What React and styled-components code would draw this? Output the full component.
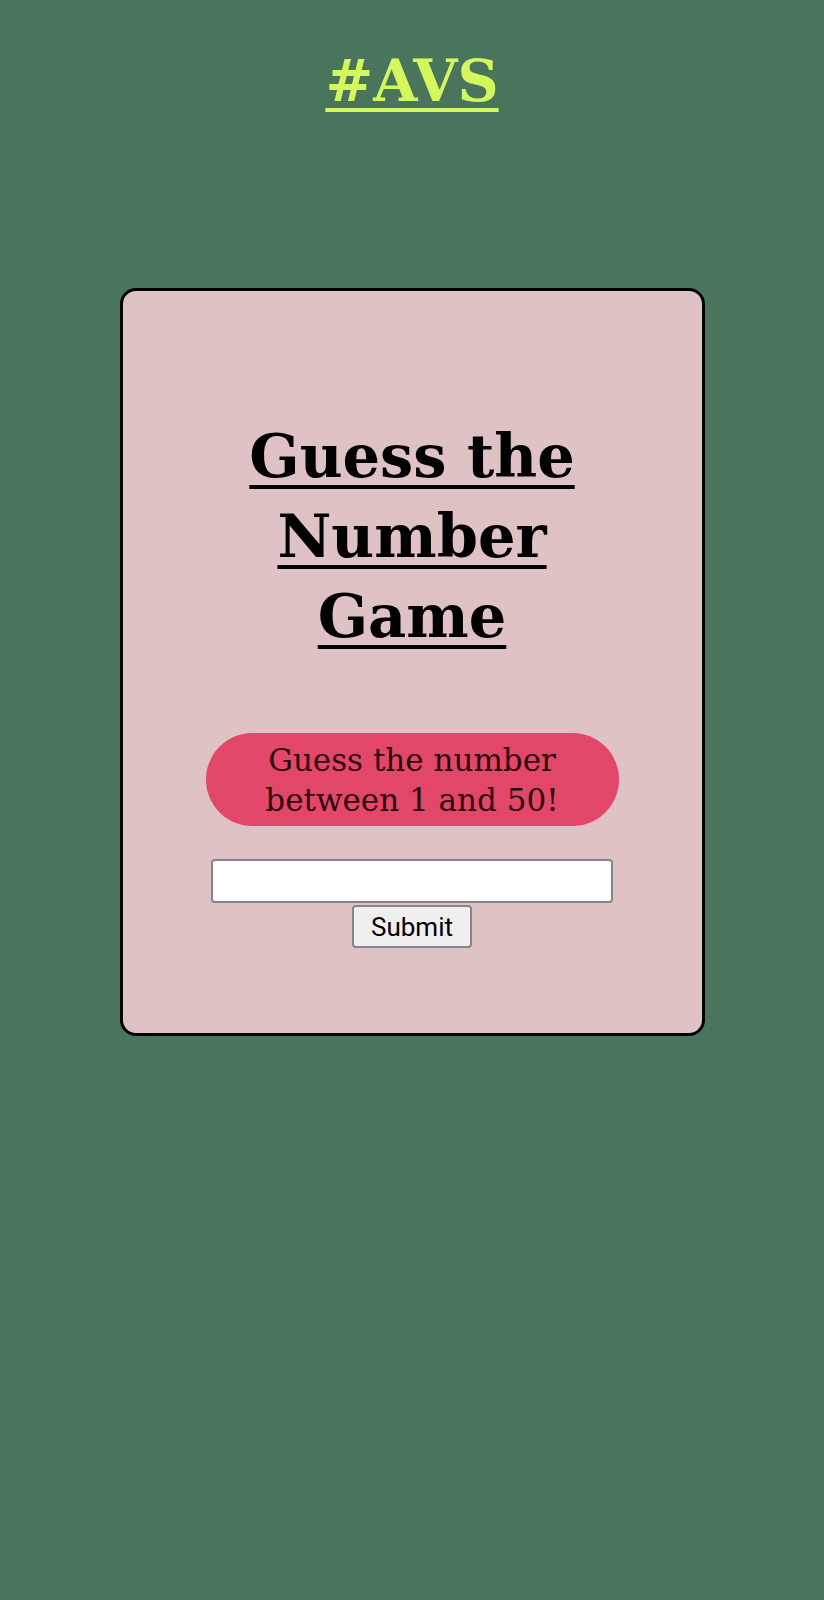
import React from 'react';
import styled, { createGlobalStyle } from 'styled-components';

const GlobalStyle = createGlobalStyle`
  body {
    margin: 0;
    background: #48755c;
    font-family: "DejaVu Serif", serif;
  }
`;

const Page = styled.div`
  display: flex;
  flex-direction: column;
  align-items: center;
  min-height: 1600px;
`;

const Brand = styled.h1`
  margin: 44px 0 0;
  font-size: 57px;
  line-height: 74px;
  font-weight: 700;
  color: #d4f75e;
  text-decoration: underline;
  text-decoration-thickness: 4px;
  text-underline-offset: 7px;
`;

const Card = styled.div`
  box-sizing: border-box;
  width: 585px;
  height: 748px;
  margin-top: 170px;
  padding-top: 126px;
  display: flex;
  flex-direction: column;
  align-items: center;
  background: #dfc2c3;
  border: 3px solid #000;
  border-radius: 16px;
`;

const Title = styled.h2`
  margin: 0;
  width: 400px;
  text-align: center;
  font-size: 59px;
  line-height: 80px;
  font-weight: 700;
  color: #000;
  text-decoration: underline;
  text-decoration-thickness: 4px;
  text-underline-offset: 8px;
`;

const Hint = styled.p`
  box-sizing: border-box;
  width: 413px;
  height: 93px;
  margin: 76px 0 0;
  padding: 0 40px;
  display: flex;
  align-items: center;
  justify-content: center;
  text-align: center;
  background: #e24668;
  border-radius: 47px;
  font-size: 31px;
  line-height: 40px;
  color: #2a0a10;
`;

const Form = styled.form`
  display: flex;
  flex-direction: column;
  align-items: center;
  margin-top: 33px;
`;

const Field = styled.input`
  box-sizing: border-box;
  width: 402px;
  height: 44px;
  border: 2px solid #858585;
  border-radius: 4px;
  background: #fff;
`;

const Button = styled.button`
  box-sizing: border-box;
  width: 120px;
  height: 43px;
  margin-top: 2px;
  border: 2px solid #858585;
  border-radius: 4px;
  background: #efefef;
  font-family: Roboto, sans-serif;
  font-size: 26px;
  color: #000;
`;

const App = () => (
  <Page>
    <GlobalStyle />
    <Brand>#AVS</Brand>
    <Card>
      <Title>Guess the Number Game</Title>
      <Hint>Guess the number between 1 and 50!</Hint>
      <Form onSubmit={e => e.preventDefault()}>
        <Field type="text" />
        <Button type="submit">Submit</Button>
      </Form>
    </Card>
  </Page>
);

export default App;
